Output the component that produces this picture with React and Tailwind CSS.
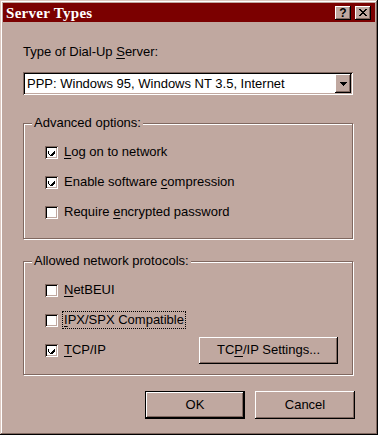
import React from 'react';

const raised =
  'shadow-[inset_-1px_-1px_0_#000,inset_1px_1px_0_#fff,inset_-2px_-2px_0_#806860]';
const sunken =
  'shadow-[inset_1px_1px_0_#806860,inset_-1px_-1px_0_#fff,inset_2px_2px_0_#000,inset_-2px_-2px_0_#c0a8a0]';

function Check({ checked, label, focused }) {
  return (
    <div className="flex items-center h-[30px]">
      <div className={`w-[13px] h-[13px] bg-white flex items-center justify-center ${sunken}`}>
        {checked && (
          <svg width="7" height="7" viewBox="0 0 7 7" shapeRendering="crispEdges">
            <path d="M0 2h1v3h1v1h1v-1h1v-1h1v-1h1v-1h1v3h-1v1h-1v1h-1v1h-1v-1h-1v-1h-1v-1h-1z" fill="#000" />
          </svg>
        )}
      </div>
      <span
        className={`ml-[4px] px-px leading-[16px] ${
          focused ? 'border border-dotted border-black' : 'border border-transparent'
        }`}
      >
        {label}
      </span>
    </div>
  );
}

function Group({ title, children }) {
  return (
    <div className="w-[330px] border border-[#806860] shadow-[inset_1px_1px_0_#fff,1px_1px_0_#fff] flex flex-col">
      <div className="-mt-[9px] ml-[8px] self-start px-[2px] bg-[#c0a8a0] leading-[16px]">{title}</div>
      <div className="pl-[21px] pt-[6px] flex flex-col">{children}</div>
    </div>
  );
}

export default function App() {
  return (
    <div
      className="w-[378px] h-[435px] bg-[#c0a8a0] p-[3px] flex flex-col text-[13px] text-black shadow-[inset_-1px_-1px_0_#000,inset_1px_1px_0_#dcc8c0,inset_-2px_-2px_0_#806860,inset_2px_2px_0_#fff]"
      style={{ fontFamily: '"Liberation Sans", Arial, sans-serif' }}
    >
      {/* title bar */}
      <div className="h-[19px] bg-[#7b0000] flex items-center pl-[3px] pr-[4px]">
        <span
          className="flex-1 text-white font-bold text-[15px] leading-[18px] tracking-[0.3px]"
          style={{ fontFamily: '"Liberation Serif", "Times New Roman", serif' }}
        >
          Server Types
        </span>
        <div className={`w-[16px] h-[14px] bg-[#c0a8a0] flex items-center justify-center font-bold text-[12px] leading-none ${raised}`}>
          ?
        </div>
        <div className={`ml-[4px] w-[16px] h-[14px] bg-[#c0a8a0] flex items-center justify-center ${raised}`}>
          <svg width="8" height="7" viewBox="0 0 8 7" shapeRendering="crispEdges">
            <path d="M0 0h2v1h1v1h2v-1h1v-1h2v1h-1v1h-1v1h-1v1h1v1h1v1h1v1h-2v-1h-1v-1h-2v1h-1v1h-2v-1h1v-1h1v-1h1v-1h-1v-1h-1v-1h-1z" fill="#000" />
          </svg>
        </div>
      </div>

      <div className="pl-[20px] flex flex-col">
        <div className="mt-[22px] leading-[16px]">
          Type of Dial-Up <span className="underline underline-offset-2">S</span>erver:
        </div>

        {/* combo */}
        <div className={`mt-[12px] w-[330px] h-[23px] bg-white flex items-center p-[2px] ${sunken}`}>
          <span className="flex-1 pl-[2px] leading-[16px]">PPP: Windows 95, Windows NT 3.5, Internet</span>
          <div className={`w-[16px] h-[19px] bg-[#c0a8a0] flex items-center justify-center ${raised}`}>
            <svg width="7" height="4" viewBox="0 0 7 4" shapeRendering="crispEdges">
              <path d="M0 0h7v1h-1v1h-1v1h-1v1h-1v-1h-1v-1h-1v-1h-1z" fill="#000" />
            </svg>
          </div>
        </div>

        <div className="mt-[28px]">
          <Group title="Advanced options:">
            <Check checked label={<><span className="underline underline-offset-2">L</span>og on to network</>} />
            <Check checked label={<>Enable software <span className="underline underline-offset-2">c</span>ompression</>} />
            <Check label={<>Require <span className="underline underline-offset-2">e</span>ncrypted password</>} />
            <div className="h-[11px]" />
          </Group>
        </div>

        <div className="mt-[22px]">
          <Group title="Allowed network protocols:">
            <Check label={<><span className="underline underline-offset-2">N</span>etBEUI</>} />
            <Check focused label={<><span className="underline underline-offset-2">I</span>PX/SPX Compatible</>} />
            <div className="flex items-center">
              <div className="w-[154px]">
                <Check checked label={<><span className="underline underline-offset-2">T</span>CP/IP</>} />
              </div>
              <div className={`w-[139px] h-[27px] flex items-center justify-center ${raised}`}>
                TC<span className="underline underline-offset-2">P</span>/IP Settings...
              </div>
            </div>
            <div className="h-[9px]" />
          </Group>
        </div>

        <div className="mt-[16px] flex justify-end pr-[20px] gap-[10px]">
          <div className="w-[100px] h-[28px] border border-black">
            <div className={`w-full h-full flex items-center justify-center ${raised}`}>OK</div>
          </div>
          <div className={`w-[100px] h-[28px] flex items-center justify-center ${raised}`}>Cancel</div>
        </div>
      </div>
    </div>
  );
}
